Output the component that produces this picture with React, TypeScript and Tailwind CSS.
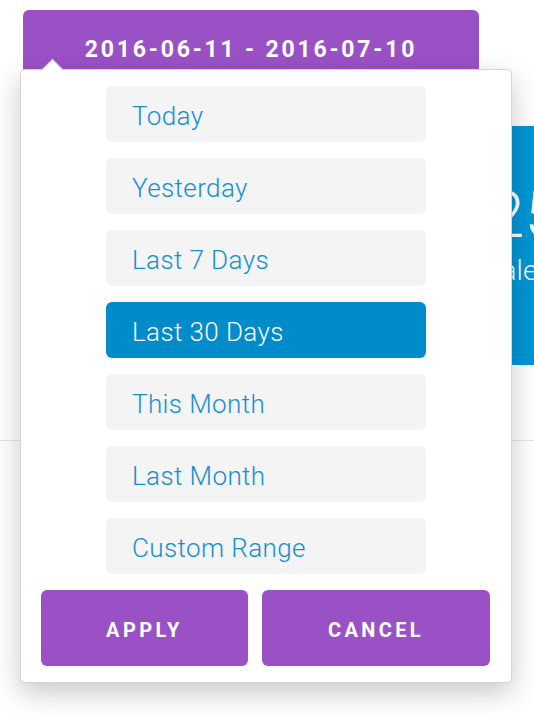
import { useState } from "react";

const ranges = ["Today", "Yesterday", "Last 7 Days", "Last 30 Days", "This Month", "Last Month", "Custom Range"];

const App = () => {
  const [active, setActive] = useState("Last 30 Days");

  return (
    <div className="relative w-[534px] h-[722px] bg-white overflow-hidden font-['Roboto',sans-serif]">
      {/* page behind the picker */}
      <div className="ml-[23px] mt-[10px] w-[456px] h-[70px] rounded-t-[6px] bg-[#9b51c6] pt-[27px] text-center">
        <span className="text-[23px] leading-[26px] font-bold tracking-[2.8px] text-white">2016-06-11 - 2016-07-10</span>
      </div>
      <div className="mt-[46px] flex gap-[40px] h-[239px]">
        <div className="w-[10px] rounded-r-[6px] bg-[#0096d6]" />
        <div className="flex-1 rounded-l-[6px] bg-[#0096d6] pl-[449px] pt-[55px] text-white whitespace-nowrap">
          <div className="text-[64px] font-light leading-[70px]">2500</div>
          <div className="text-[28px] font-light leading-[34px] mt-[3px] -ml-[4px]">Sales</div>
        </div>
      </div>
      <div className="mt-[75px] h-px bg-[#e6e6e6]" />

      {/* dropdown */}
      <div className="absolute left-[20px] top-[69px] w-[492px] h-[614px] rounded-[5px] border border-[#d6d6d6] bg-white shadow-[0_10px_28px_rgba(0,0,0,0.22)]">
        <div className="absolute left-[24px] -top-[8px] w-[15px] h-[15px] rotate-45 border-l border-t border-[#d6d6d6] bg-white" />
        <div className="relative flex flex-col gap-[16px] pt-[16px] pl-[85px]">
          {ranges.map((r) => (
            <div
              key={r}
              onClick={() => setActive(r)}
              className={`w-[320px] h-[56px] flex items-center rounded-[6px] pl-[26px] pt-[3px] text-[26px] font-light tracking-[0.4px] leading-[28px] cursor-pointer ${
                active === r ? "bg-[#008bca] text-white" : "bg-[#f4f4f4] text-[#168fd2]"
              }`}
            >
              {r}
            </div>
          ))}
        </div>
        <div className="flex gap-[14px] pl-[20px] mt-[16px]">
          <button className="w-[207px] h-[76px] rounded-[6px] bg-[#9b51c6] pt-[3px] text-white text-[20px] font-bold tracking-[3.4px]">APPLY</button>
          <button className="w-[228px] h-[76px] rounded-[6px] bg-[#9b51c6] pt-[3px] text-white text-[20px] font-bold tracking-[3.4px]">CANCEL</button>
        </div>
      </div>
    </div>
  );
};

export default App;
